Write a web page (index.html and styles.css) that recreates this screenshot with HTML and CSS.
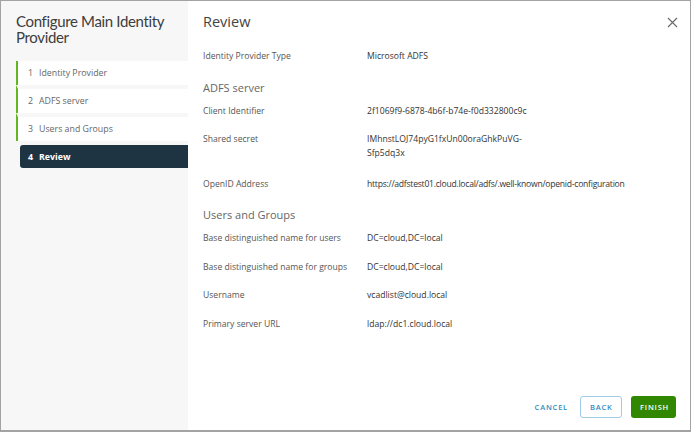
FILE: index.html
```html
<!DOCTYPE html>
<html>
<head>
<meta charset="utf-8">
<link rel="stylesheet" href="styles.css">
</head>
<body>
<div class="modal">
  <aside class="sidebar">
    <h1 class="title">Configure Main Identity Provider</h1>
    <nav class="steps">
      <div class="step done"><span class="num">1</span>Identity Provider</div>
      <div class="step done"><span class="num">2</span>ADFS server</div>
      <div class="step done"><span class="num">3</span>Users and Groups</div>
      <div class="step active"><span class="num">4</span>Review</div>
    </nav>
  </aside>
  <main class="content">
    <header class="head">
      <h2 class="heading">Review</h2>
      <button class="close" aria-label="Close">
        <svg width="11" height="11" viewBox="0 0 11 11"><path d="M1 1L10 10M10 1L1 10" stroke="#6d6d6d" stroke-width="1.2" fill="none"/></svg>
      </button>
    </header>
    <div class="body">
      <div class="row"><div class="label">Identity Provider Type</div><div class="value">Microsoft ADFS</div></div>
      <h3 class="section">ADFS server</h3>
      <div class="row"><div class="label">Client Identifier</div><div class="value">2f1069f9-6878-4b6f-b74e-f0d332800c9c</div></div>
      <div class="row multi"><div class="label">Shared secret</div><div class="value">IMhnstLOJ74pyG1fxUn00oraGhkPuVG-<br>Sfp5dq3x</div></div>
      <div class="row"><div class="label">OpenID Address</div><div class="value url">https://adfstest01.cloud.local/adfs/.well-known/openid-configuration</div></div>
      <h3 class="section">Users and Groups</h3>
      <div class="row"><div class="label">Base distinguished name for users</div><div class="value">DC=cloud,DC=local</div></div>
      <div class="row"><div class="label">Base distinguished name for groups</div><div class="value">DC=cloud,DC=local</div></div>
      <div class="row"><div class="label">Username</div><div class="value">vcadlist@cloud.local</div></div>
      <div class="row"><div class="label">Primary server URL</div><div class="value">ldap://dc1.cloud.local</div></div>
    </div>
    <footer class="footer">
      <button class="btn link">CANCEL</button>
      <button class="btn outline">BACK</button>
      <button class="btn primary">FINISH</button>
    </footer>
  </main>
</div>
</body>
</html>
```

FILE: styles.css
```css
* { box-sizing: border-box; }
html, body { margin: 0; padding: 0; background: #fff; }
body { font-family: "Open Sans", "Lato", sans-serif; color: #333; }

.modal {
  width: 691px;
  height: 432px;
  border: 1px solid #a3a3a3;
  border-bottom-width: 2px;
  display: flex;
  background: #fff;
}

.sidebar {
  width: 187px;
  flex: none;
  background: #f7f7f7;
  padding: 12px 0 0 15px;
}

.title {
  margin: 0;
  font-family: "Lato", sans-serif;
  font-size: 15px;
  font-weight: 400;
  line-height: 16px;
  color: #3d3d3d;
  letter-spacing: -0.35px;
  width: 168px;
}

.steps {
  margin-top: 16px;
  display: flex;
  flex-direction: column;
  gap: 4px;
}

.step {
  height: 24px;
  display: flex;
  align-items: center;
  background: #fff;
  font-size: 8.8px;
  color: #666;
  padding-left: 10px;
  border-left: 2px solid #62b720;
}
.step .num { width: 11px; }

.step.done + .step.done { margin-top: -4px; border-top: 4px solid #f7f7f7; height: 28px; }

.step.active {
  border-left: none;
  margin-left: 4px;
  background: #1f3442;
  color: #fff;
  font-weight: 700;
  height: 23px;
  padding-left: 8px;
  border-radius: 3px 0 0 3px;
}

.content {
  flex: 1;
  display: flex;
  flex-direction: column;
  padding: 0 12px 12px 15px;
}

.head {
  display: flex;
  justify-content: space-between;
  align-items: center;
  padding-top: 7px;
  height: 34px;
}

.heading {
  margin: 0;
  font-size: 14.5px;
  font-weight: 400;
  color: #444;
}

.close {
  border: none;
  background: none;
  padding: 0;
  margin-top: 2px;
  width: 11px;
  height: 11px;
  display: flex;
}

.body {
  flex: 1;
  display: flex;
  flex-direction: column;
  padding-top: 14px;
}

.row {
  display: flex;
  font-size: 8.6px;
  line-height: 14px;
  margin-bottom: 14.5px;
}
.row.multi { margin-bottom: 16.5px; }
.label { width: 164px; flex: none; color: #555; }
.value { color: #333; }
.value.url { letter-spacing: -0.25px; }

.section {
  margin: 2px 0 8px 0;
  font-size: 11px;
  font-weight: 400;
  color: #666;
  line-height: 16px;
}

.footer {
  display: flex;
  justify-content: flex-end;
  align-items: center;
  gap: 9px;
}

.btn {
  font-family: "Open Sans", sans-serif;
  font-size: 7.5px;
  font-weight: 600;
  letter-spacing: 0.8px;
  height: 22px;
  border-radius: 3px;
  padding: 0 9px;
  cursor: pointer;
}
.btn.link { border: none; background: none; color: #2f8dc1; padding: 0; margin-right: 3px; }
.btn.outline { border: 1px solid #9fcbe4; background: #fff; color: #2f8dc1; width: 42px; }
.btn.primary { border: none; background: #318700; color: #fff; width: 45px; margin-right: 2px; }
```
